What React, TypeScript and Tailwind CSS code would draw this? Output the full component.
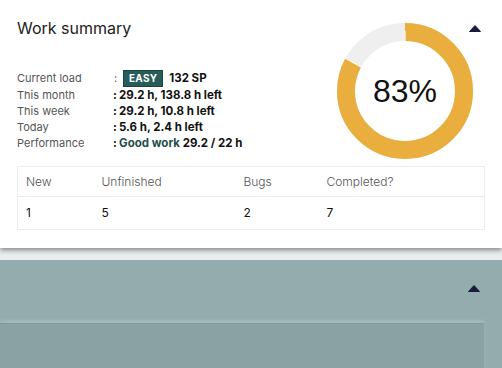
import React from "react";

const C = 2 * Math.PI * 59;

function Caret() {
  return (
    <svg width="12" height="7" viewBox="0 0 12 7" className="block">
      <path d="M6 0.5 L11.5 6.5 L0.5 6.5 Z" fill="#1b1b3b" stroke="#1b1b3b" strokeLinejoin="round" />
    </svg>
  );
}

function Donut({ pct }: { pct: number }) {
  const yellow = (C * pct) / 100;
  return (
    <div className="relative h-[136px] w-[136px]">
      <svg width="136" height="136" viewBox="0 0 136 136" className="block">
        <g transform="rotate(-90 68 68)">
          <circle cx="68" cy="68" r="59" fill="none" stroke="#efefef" strokeWidth="18" />
          <circle
            cx="68"
            cy="68"
            r="59"
            fill="none"
            stroke="#e9ae3e"
            strokeWidth="18"
            strokeDasharray={`${yellow} ${C - yellow}`}
          />
          <line x1="118" y1="68" x2="128" y2="68" stroke="#fff" strokeWidth="1.2" />
          <line
            x1={68 + 49 * Math.cos((2 * Math.PI * pct) / 100)}
            y1={68 + 49 * Math.sin((2 * Math.PI * pct) / 100)}
            x2={68 + 69 * Math.cos((2 * Math.PI * pct) / 100)}
            y2={68 + 69 * Math.sin((2 * Math.PI * pct) / 100)}
            stroke="#fff"
            strokeWidth="1.2"
          />
        </g>
      </svg>
      <div className="absolute inset-0 flex items-center justify-center font-['Liberation_Sans',Arial,sans-serif] text-[32px] text-[#111]">
        {pct}%
      </div>
    </div>
  );
}

const rows = [
  { label: "This month", value: <b>29.2 h, 138.8 h left</b> },
  { label: "This week", value: <b>29.2 h, 10.8 h left</b> },
  { label: "Today", value: <b>5.6 h, 2.4 h left</b> },
  {
    label: "Performance",
    value: (
      <b>
        <span className="text-[#1d4e4c]">Good work</span> 29.2 / 22 h
      </b>
    ),
  },
];

export default function App() {
  return (
    <div className="min-h-[368px] bg-[#94acad] font-['Inter','Noto_Sans',sans-serif]">
      <div className="bg-[#e9edee] pb-[12px]">
        <div className="relative bg-white px-[17px] pb-[18px] pt-[17px] shadow-[0_2px_5px_rgba(0,0,0,0.45)]">
          <div className="absolute right-[21px] top-[25px]">
            <Caret />
          </div>
          <div className="flex items-start">
            <div className="flex-1">
              <h2 className="text-[16px] leading-[22px] text-[#222]">Work summary</h2>
              <div className="mt-[30px] text-[11px] leading-[16px] text-[#111]">
                <div className="flex h-[18px] items-center">
                  <span className="w-[97px] text-[#555]">Current load</span>
                  <span className="w-[9px] text-[#555]">:</span>
                  <span className="flex h-[17px] items-center border border-[#1a4544] bg-[#275c5b] px-[5px] text-[10px] font-bold tracking-wide text-white">
                    EASY
                  </span>
                  <b className="ml-[6px] text-[11.5px]">132 SP</b>
                </div>
                {rows.map((r) => (
                  <div key={r.label} className="flex h-[16px] items-center text-[11.5px]">
                    <span className="w-[96px] text-[11px] text-[#555]">{r.label}</span>
                    <span className="w-[6px] font-bold">:</span>
                    {r.value}
                  </div>
                ))}
              </div>
            </div>
            <div className="mr-[12px] mt-[6px]">
              <Donut pct={83} />
            </div>
          </div>
          <table className="mt-[7px] w-full table-fixed border border-[#ececec] text-[12px]">
            <colgroup>
              <col className="w-[76px]" />
              <col className="w-[142px]" />
              <col className="w-[83px]" />
              <col />
            </colgroup>
            <thead>
              <tr className="h-[30px] border-b border-[#ececec] text-left text-[#555]">
                <th className="pl-[8px] font-light">New</th>
                <th className="pl-[8px] font-light">Unfinished</th>
                <th className="pl-[8px] font-light">Bugs</th>
                <th className="pl-[8px] font-light">Completed?</th>
              </tr>
            </thead>
            <tbody>
              <tr className="h-[33px] text-[#111]">
                <td className="pl-[8px]">1</td>
                <td className="pl-[8px]">5</td>
                <td className="pl-[8px]">2</td>
                <td className="pl-[8px]">7</td>
              </tr>
            </tbody>
          </table>
        </div>
      </div>
      <div className="pt-[25px]">
        <div className="flex justify-end pr-[22px]">
          <Caret />
        </div>
        <div className="mr-[18px] mt-[31px] h-[60px] border-t border-[#82999a] bg-[#8aa2a3] shadow-[0_-3px_3px_rgba(255,255,255,0.15)]" />
      </div>
    </div>
  );
}
